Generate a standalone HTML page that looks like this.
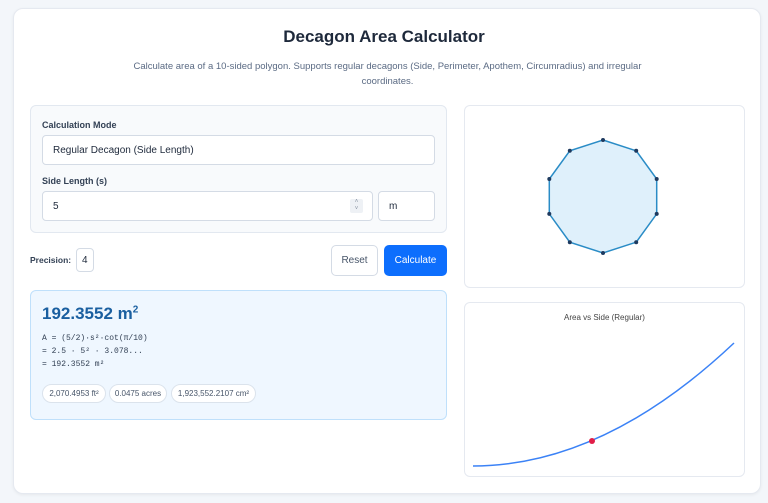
<!DOCTYPE html>
<html><head><meta charset="utf-8"><style>
*{box-sizing:border-box;margin:0;padding:0}
body{width:768px;height:503px;background:#f3f6fa;font-family:"Liberation Sans",sans-serif;position:relative;overflow:hidden;color:#1e293b}
.abs{position:absolute}
.card{left:13px;top:8px;width:748px;height:486px;background:#fff;border:1px solid #e5e9f0;border-radius:10px;box-shadow:0 1px 3px rgba(0,0,0,.06)}
h1{position:absolute;left:0;width:768px;top:27px;text-align:center;font-size:17px;font-weight:bold;color:#1e293b}
.sub{left:120px;width:535px;top:59px;text-align:center;font-size:9.5px;line-height:15px;color:#5b6b84}
.panel{left:30px;top:105px;width:417px;height:128px;background:#f8fafc;border:1px solid #e2e8f0;border-radius:6px}
.lbl{font-size:9px;font-weight:bold;color:#334155}
.inp{background:#fff;border:1px solid #d4dbe5;border-radius:4px;font-size:10px;color:#1e293b;padding-left:10px;display:flex;align-items:center}
.btn{border-radius:5px;font-size:10px;display:flex;align-items:center;justify-content:center}
.res{left:30px;top:290px;width:417px;height:130px;background:#eff7ff;border:1px solid #bfe0fb;border-radius:6px}
.mono{font-family:"Liberation Mono",monospace;font-size:8px;color:#334155;line-height:13px}
.chip{top:384px;height:19px;border:1px solid #dbe3ec;background:#fff;border-radius:10px;font-size:8px;color:#475569;display:flex;align-items:center;justify-content:center}
.rp{left:464px;width:281px;background:#fff;border:1px solid #e5e9f0;border-radius:6px}
</style></head><body>
<div class="abs card"></div>
<h1>Decagon Area Calculator</h1>
<div class="abs sub">Calculate area of a 10-sided polygon. Supports regular decagons (Side, Perimeter, Apothem, Circumradius) and irregular coordinates.</div>
<div class="abs panel"></div>
<div class="abs lbl" style="left:42px;top:120px">Calculation Mode</div>
<div class="abs inp" style="left:42px;top:135px;width:393px;height:30px">Regular Decagon (Side Length)</div>
<div class="abs lbl" style="left:42px;top:176px">Side Length (s)</div>
<div class="abs inp" style="left:42px;top:191px;width:331px;height:30px">5</div>
<div class="abs" style="left:350px;top:199px;width:13px;height:14px;background:#eef1f5;border-radius:2px;font-size:6px;color:#8a94a3;text-align:center;line-height:7px">˄<br>˅</div>
<div class="abs inp" style="left:378px;top:191px;width:57px;height:30px">m</div>
<div class="abs lbl" style="left:30px;top:255px;font-size:8.5px">Precision:</div>
<div class="abs inp" style="left:76px;top:248px;width:18px;height:24px;padding-left:5px">4</div>
<div class="abs btn" style="left:331px;top:245px;width:47px;height:31px;border:1px solid #d4dbe5;background:#fff;color:#475569">Reset</div>
<div class="abs btn" style="left:384px;top:245px;width:63px;height:31px;background:#0d6efd;color:#fff">Calculate</div>
<div class="abs res"></div>
<div class="abs" style="left:42px;top:304px;font-size:17px;font-weight:bold;color:#1a5fa0">192.3552 m<sup style="font-size:10px">2</sup></div>
<div class="abs mono" style="left:42px;top:332px">A = (5/2)·s²·cot(π/10)<br>= 2.5 · 5² · 3.078...<br>= 192.3552 m²</div>
<div class="abs chip" style="left:42px;width:64px">2,070.4953 ft²</div>
<div class="abs chip" style="left:109px;width:58px">0.0475 acres</div>
<div class="abs chip" style="left:171px;width:85px">1,923,552.2107 cm²</div>
<div class="abs rp" style="top:105px;height:183px"></div>
<div class="abs rp" style="top:302px;height:175px"></div>
<div class="abs" style="left:464px;top:313px;width:281px;text-align:center;font-size:8px;color:#444">Area vs Side (Regular)</div>
<svg class="abs" style="left:0;top:0" width="768" height="503">
<polygon points="603,140 636.2,150.8 656.7,179 656.7,213.9 636.2,242.2 603,253 569.8,242.2 549.3,213.9 549.3,179 569.8,150.8" fill="#dff0fb" stroke="#2a8cc6" stroke-width="1.5"/>
<g fill="#1e3a5f"><circle cx="603" cy="140" r="2"/><circle cx="636.2" cy="150.8" r="2"/><circle cx="656.7" cy="179" r="2"/><circle cx="656.7" cy="213.9" r="2"/><circle cx="636.2" cy="242.2" r="2"/><circle cx="603" cy="253" r="2"/><circle cx="569.8" cy="242.2" r="2"/><circle cx="549.3" cy="213.9" r="2"/><circle cx="549.3" cy="179" r="2"/><circle cx="569.8" cy="150.8" r="2"/></g>
<path d="M473,466 Q603.5,466 734,343" fill="none" stroke="#3b82f6" stroke-width="1.5"/>
<circle cx="592" cy="441" r="3" fill="#e11d48"/>
</svg>
</body></html>
